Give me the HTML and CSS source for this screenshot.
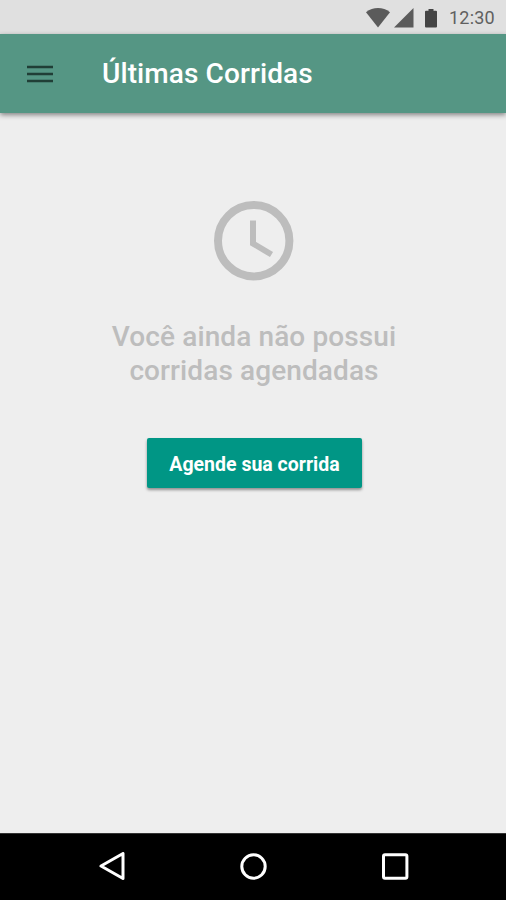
FILE: index.html
```html
<!DOCTYPE html>
<html lang="pt-BR">
<head>
<meta charset="utf-8">
<title>Últimas Corridas</title>
<link rel="stylesheet" href="styles.css">
</head>
<body>
<div class="status">
  <svg class="wifi" width="24" height="20" viewBox="0 0 24 20"><path d="M0 4.3C7-1.3 17-1.3 24 4.3L12 19.5z"/></svg>
  <svg class="signal" width="20" height="20" viewBox="0 0 20 20"><path d="M0 19.5L19.5 0v19.5z"/></svg>
  <svg class="battery" width="12" height="19" viewBox="0 0 12 19"><path d="M3.5 0h5v1.8H11q1 0 1 1V17.500q0 1-1 1H1q-1 0-1-1V2.800q0-1 1-1h2.500z"/></svg>
  <span class="time">12:30</span>
</div>
<header class="appbar">
  <svg class="menu" width="26" height="18" viewBox="0 0 26 18"><path d="M0 2h26M0 9h26M0 16h26"/></svg>
  <h1 class="title">Últimas Corridas</h1>
</header>
<main class="content">
  <svg class="clock" width="80" height="80" viewBox="0 0 80 80"><circle cx="39.700" cy="39.700" r="35.700"/><path d="M39 19.500v23l18.500 11"/></svg>
  <p class="message">Você ainda não possui<br>corridas agendadas</p>
  <button class="action">Agende sua corrida</button>
</main>
<nav class="nav">
  <svg width="28" height="30" viewBox="0 0 28 30"><path d="M3 14L25 1.500v25z"/></svg>
  <svg width="28" height="28" viewBox="0 0 28 28"><circle cx="13.500" cy="13.500" r="11.700"/></svg>
  <svg width="28" height="28" viewBox="0 0 28 28"><rect x="2.500" y="1.800" width="23.400" height="23.400" rx="1.500"/></svg>
</nav>
</body>
</html>
```
FILE: styles.css
```css
* { box-sizing: border-box; }
body {
  margin: 0;
  height: 900px;
  display: flex;
  flex-direction: column;
  background: #eee;
  font-family: Roboto, "Liberation Sans", sans-serif;
  overflow: hidden;
}
svg { display: block; flex: none; }
.status {
  height: 34px;
  display: flex;
  align-items: flex-start;
  padding: 8px 0 0 366px;
  background: #e0e0e0;
  color: #606060;
}
.wifi, .signal { fill: #5b5b5b; }
.signal { margin-left: 4px; }
.battery { fill: #444; margin: 1px 0 0 11px; }
.time { margin-left: 12px; font-size: 18px; line-height: 20px; letter-spacing: .2px; }
.appbar {
  height: 79px;
  display: flex;
  align-items: center;
  padding-left: 27px;
  background: #559684;
  box-shadow: 0 2px 5px rgba(0, 0, 0, .45);
}
.menu { fill: none; stroke: #203e36; stroke-width: 2.4; }
.title {
  margin: 0 0 0 49px;
  font-size: 28px;
  line-height: 32px;
  font-weight: 500;
  letter-spacing: .1px;
  color: #fff;
  white-space: nowrap;
}
.content {
  flex: 1;
  display: flex;
  flex-direction: column;
  align-items: center;
  padding: 88px 0 0 1px;
}
.clock { fill: none; stroke: #bdbdbd; stroke-width: 8; }
.clock path { stroke-width: 6; }
.message {
  margin: 39px 0 0 1px;
  font-size: 28px;
  line-height: 34px;
  font-weight: 500;
  letter-spacing: .1px;
  text-align: center;
  color: #bdbdbd;
  white-space: nowrap;
}
.action {
  width: 215px;
  height: 50px;
  margin: 50px 0 0 1px;
  padding: 2px 0 0 1px;
  border: 0;
  border-radius: 2px;
  background: #009685;
  color: #fff;
  font: 700 19.5px Roboto, "Liberation Sans", sans-serif;
  white-space: nowrap;
  box-shadow: 0 2px 3px rgba(0, 0, 0, .4);
}
.nav {
  height: 67px;
  display: flex;
  justify-content: space-between;
  align-items: center;
  padding: 0 97px 0 98px;
  border-top: 1px solid #333;
  background: #000;
}
.nav svg { fill: none; stroke: #fff; stroke-width: 3; stroke-linejoin: round; }
```
